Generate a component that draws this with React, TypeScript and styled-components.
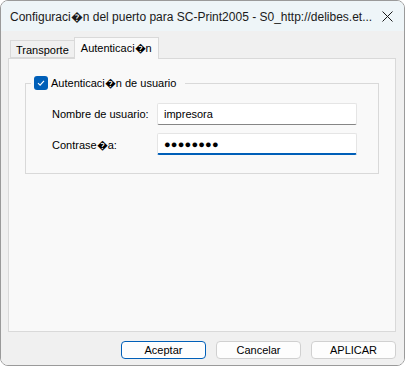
import styled, { createGlobalStyle } from 'styled-components';

const GlobalStyle = createGlobalStyle`
  html, body {
    margin: 0;
    padding: 0;
    background: #ffffff;
  }
  * {
    box-sizing: border-box;
  }
`;

const Window = styled.div`
  width: 405px;
  height: 366px;
  border: 1px solid #9a9a9a;
  border-radius: 8px;
  overflow: hidden;
  display: flex;
  flex-direction: column;
  font-family: 'Liberation Sans', Arial, sans-serif;
  color: #000;
`;

const TitleBar = styled.div`
  height: 30px;
  flex: none;
  background: #eef5f8;
  display: flex;
  align-items: center;
  justify-content: space-between;
  padding: 0 10px 0 9px;
  font-size: 12px;
  color: #1a1a1a;
`;

const Title = styled.span`
  white-space: nowrap;
`;

const CloseIcon = styled.svg`
  width: 11px;
  height: 11px;
  margin-right: 1px;
`;

const Body = styled.div`
  flex: 1;
  background: #f0f0f0;
  display: flex;
  flex-direction: column;
  padding: 6px 8px 0 7px;
`;

const TabStrip = styled.div`
  height: 21px;
  display: flex;
  align-items: flex-end;
  padding-left: 2px;
  position: relative;
  z-index: 1;
`;

const Tab = styled.div<{ $active?: boolean }>`
  height: ${p => (p.$active ? '22px' : '18px')};
  margin-bottom: ${p => (p.$active ? '-1px' : '0')};
  padding: ${p => (p.$active ? '2px 6px 0 6px' : '3px 5px 0 5px')};
  border: 1px solid #d9d9d9;
  border-bottom: ${p => (p.$active ? 'none' : '1px solid #d9d9d9')};
  border-right: ${p => (p.$active ? '1px solid #d9d9d9' : 'none')};
  background: ${p => (p.$active ? '#f9f9f9' : '#f0f0f0')};
  font-size: 11px;
  white-space: nowrap;
`;

const Panel = styled.div`
  height: 274px;
  border: 1px solid #d9d9d9;
  background: #f9f9f9;
  padding: 17px 16px 0 16px;
`;

const Group = styled.fieldset`
  margin: 0;
  width: 354px;
  height: 98px;
  border: 1px solid #d9d9d9;
  padding: 13px 0 0 5px;
  display: flex;
  flex-direction: column;
  gap: 8px;
`;

const Legend = styled.legend`
  margin-left: 0;
  padding: 0 9px 0 3px;
  display: flex;
  align-items: center;
  gap: 3px;
  font-size: 11px;
  line-height: 14px;
`;

const CheckBox = styled.span`
  width: 14px;
  height: 14px;
  border-radius: 3px;
  background: #005fb8;
  display: inline-flex;
  align-items: center;
  justify-content: center;
`;

const Row = styled.div`
  display: flex;
  align-items: center;
  padding-left: 21px;
`;

const Label = styled.span`
  width: 105px;
  font-size: 11px;
`;

const Field = styled.div<{ $focused?: boolean }>`
  width: 200px;
  height: 22px;
  background: #ffffff;
  border: 1px solid #e5e5e5;
  border-bottom: ${p => (p.$focused ? '2px solid #005fb8' : '1px solid #868686')};
  border-radius: 2px;
  padding: 0 6px;
  display: flex;
  align-items: center;
  font-size: 11px;
`;

const Dots = styled.span`
  font-size: 11px;
  letter-spacing: 0.2px;
  padding-top: 1px;
`;

const ButtonBar = styled.div`
  flex: 1;
  display: flex;
  justify-content: flex-end;
  align-items: flex-start;
  gap: 10px;
  padding-top: 9px;
`;

const Button = styled.button<{ $default?: boolean }>`
  width: 85px;
  height: 18px;
  padding: 0;
  font-family: 'Liberation Sans', Arial, sans-serif;
  font-size: 11px;
  color: #000;
  background: #fdfdfd;
  border: 1px solid ${p => (p.$default ? '#005fb8' : '#d0d0d0')};
  border-radius: 4px;
  box-shadow: ${p => (p.$default ? 'inset 0 0 0 1px #ffffff' : 'none')};
`;

const R = '\uFFFD';

const App = () => {
  return (
    <>
      <GlobalStyle />
      <Window>
        <TitleBar>
          <Title>{`Configuraci${R}n del puerto para SC-Print2005 - S0_http://delibes.et...`}</Title>
          <CloseIcon viewBox="0 0 11 11">
            <path d="M0.5 0.5 L10.5 10.5 M10.5 0.5 L0.5 10.5" stroke="#1a1a1a" strokeWidth="1" fill="none" />
          </CloseIcon>
        </TitleBar>
        <Body>
          <TabStrip>
            <Tab>Transporte</Tab>
            <Tab $active>{`Autenticaci${R}n`}</Tab>
          </TabStrip>
          <Panel>
            <Group>
              <Legend>
                <CheckBox>
                  <svg width="10" height="10" viewBox="0 0 10 10">
                    <path d="M2 5.2 L4.1 7.2 L8 2.8" stroke="#ffffff" strokeWidth="1.1" fill="none" />
                  </svg>
                </CheckBox>
                {`Autenticaci${R}n de usuario`}
              </Legend>
              <Row>
                <Label>Nombre de usuario:</Label>
                <Field>impresora</Field>
              </Row>
              <Row>
                <Label>{`Contrase${R}a:`}</Label>
                <Field $focused>
                  <Dots>●●●●●●●●</Dots>
                </Field>
              </Row>
            </Group>
          </Panel>
          <ButtonBar>
            <Button $default>Aceptar</Button>
            <Button>Cancelar</Button>
            <Button>APLICAR</Button>
          </ButtonBar>
        </Body>
      </Window>
    </>
  );
};

export default App;
